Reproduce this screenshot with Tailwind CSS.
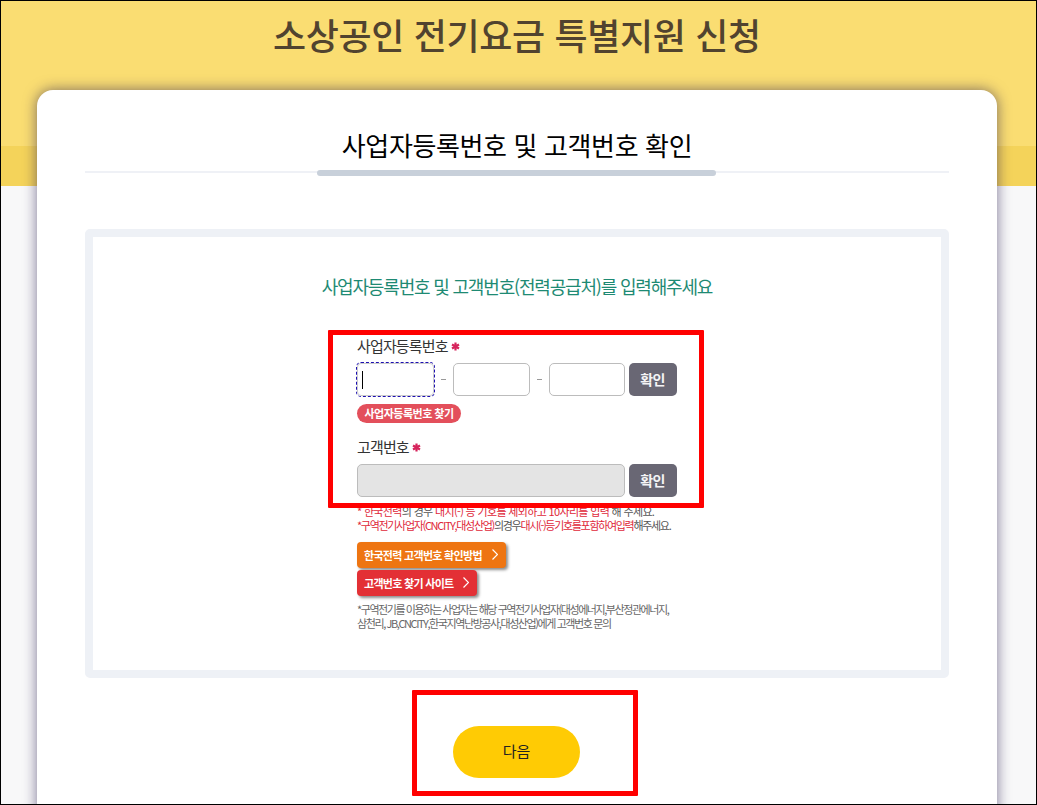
<!DOCTYPE html>
<html lang="ko">
<head>
    <meta charset="UTF-8">
    <meta name="viewport" content="width=device-width, initial-scale=1.0">
    <title>소상공인 전기요금 특별지원 신청</title>
    <script src="https://cdn.jsdelivr.net/npm/@tailwindcss/browser@4"></script>
</head>
<body class="font-['Noto_Sans_CJK_KR',sans-serif]">
    <div class="relative h-[805px] w-[1037px] overflow-hidden border border-black bg-[#f8f8f9]">
        <!-- header background -->
        <div class="absolute inset-x-0 top-0 h-[185px] border-b-[40px] border-[#f4d35a] bg-[#fadd72]"></div>

        <div class="relative flex flex-col">
            <h1 class="h-[89px] pt-[7px] pl-[272px] text-[36px] leading-[52px] font-medium tracking-[-0.37px] whitespace-nowrap text-[#51432f]">소상공인 전기요금 특별지원 신청</h1>

            <main class="ml-9 h-[760px] w-[960px] rounded-[16px] bg-white px-12 pt-9 shadow-[0_0_14px_rgba(40,30,80,0.6)]">
                <div class="relative h-[47px] border-b-2 border-[#eff1f6]">
                    <h2 class="text-center text-[26px] leading-[38px] font-normal tracking-[-0.37px] text-black">사업자등록번호 및 고객번호 확인</h2>
                    <span class="absolute top-[44px] left-[232px] h-[6px] w-[399px] rounded-full bg-[#c8d0da]"></span>
                </div>

                <section class="mt-14 h-[449px] rounded-[5px] border-8 border-[#eef1f6] pt-[35px]">
                    <p class="text-center text-[18px] leading-[28px] tracking-[-1.18px] text-[#1e8a73]">사업자등록번호 및 고객번호(전력공급처)를 입력해주세요</p>

                    <form class="ml-[264px] w-[320px] pt-8">
                        <label class="flex h-[28px] items-center text-[15px] tracking-[-0.85px] text-[#333]">사업자등록번호
                            <svg class="mt-px ml-[3px] size-[9px]" viewBox="0 0 9 9" stroke="#d6245c" stroke-width="2.2"><path d="M4.5 0.5v8M1 2.5l7 4M8 2.5l-7 4"/></svg>
                        </label>
                        <div class="mt-[3px] flex h-[33px] items-center">
                            <div class="flex h-[33px] w-[77px] items-center rounded-[4px] border border-[#ccc] pl-[4px] outline-1 outline-dashed outline-[#1d10b0]"><span class="h-[18px] w-px bg-black"></span></div>
                            <span class="ml-[7px] h-[1.5px] w-[5px] bg-[#999]"></span>
                            <div class="ml-[7px] h-[33px] w-[77px] rounded-[5px] border border-[#bcbcbc]"></div>
                            <span class="mx-[7px] h-[1.5px] w-[5px] bg-[#999]"></span>
                            <div class="h-[33px] w-[76px] rounded-[5px] border border-[#bcbcbc]"></div>
                            <button type="button" class="ml-auto h-[33px] w-[48px] rounded-[5px] bg-[#696774] pr-px text-[14px] font-bold tracking-[-0.6px] text-[#f4f4f6]">확인</button>
                        </div>
                        <button type="button" class="mt-2 block h-[19px] w-[104px] rounded-full bg-[#e34f5b] text-[11px] leading-[19px] font-bold tracking-[-0.5px] text-white">사업자등록번호 찾기</button>

                        <label class="mt-[10px] flex h-[28px] items-center text-[15px] tracking-[-0.85px] text-[#333]">고객번호
                            <svg class="mt-px ml-[3px] size-[9px]" viewBox="0 0 9 9" stroke="#d6245c" stroke-width="2.2"><path d="M4.5 0.5v8M1 2.5l7 4M8 2.5l-7 4"/></svg>
                        </label>
                        <div class="mt-[3px] flex justify-between">
                            <div class="h-[33px] w-[268px] rounded-[5px] border border-[#bcbcbc] bg-[#e4e4e4]"></div>
                            <button type="button" class="h-[33px] w-[48px] rounded-[5px] bg-[#696774] pr-px text-[14px] font-bold tracking-[-0.6px] text-[#f4f4f6]">확인</button>
                        </div>

                        <div class="mt-[7px] text-[11px] leading-[14px] whitespace-nowrap text-[#555]">
                            <p class="tracking-[-0.66px]"><span class="text-[#e0283a]">* 한국전력</span>의 경우 <span class="text-[#e0283a]">대시(-) 등 기호를 제외하고 10자리를 입력</span> 해 주세요.</p>
                            <p class="tracking-[-1.31px]"><span class="text-[#e0283a]">*구역전기사업자(CNCITY,대성산업)</span>의경우<span class="text-[#e0283a]">대시(-)등기호를포함하여입력</span>해주세요.</p>
                        </div>

                        <div class="mt-[10px] flex flex-col items-start gap-[2px] text-[11px] font-bold text-white">
                            <a class="flex h-[26px] w-[149px] items-center justify-between rounded-[4px] bg-[#ee7512] pt-px pr-[8px] pl-[7px] whitespace-nowrap tracking-[-0.7px] shadow-[2px_2px_3px_rgba(0,0,0,0.45)]">한국전력 고객번호 확인방법
                                <svg class="mb-[3px] h-[11px] w-[6px]" viewBox="0 0 6 11" fill="none" stroke="#fff" stroke-width="1.2"><path d="M0.5 0.5l5 5l-5 5"/></svg>
                            </a>
                            <a class="flex h-[26px] w-[120px] items-center justify-between rounded-[4px] bg-[#e33035] pt-px pr-[8px] pl-[7px] whitespace-nowrap tracking-[-0.7px] shadow-[2px_2px_3px_rgba(0,0,0,0.45)]">고객번호 찾기 사이트
                                <svg class="mb-[3px] h-[11px] w-[6px]" viewBox="0 0 6 11" fill="none" stroke="#fff" stroke-width="1.2"><path d="M0.5 0.5l5 5l-5 5"/></svg>
                            </a>
                        </div>

                        <div class="mt-[6px] text-[11px] leading-[14px] whitespace-nowrap text-[#666]">
                            <p class="tracking-[-1.43px]">*구역전기를 이용하는 사업자는 해당 구역전기사업자(대성에너지,부산정관에너지,</p>
                            <p class="tracking-[-1.41px]">삼천리, JB,CNCITY,한국지역난방공사,대성산업)에게 고객번호 문의</p>
                        </div>
                    </form>
                </section>

                <button type="button" class="mt-12 ml-[368px] block h-[52px] w-[127px] rounded-full bg-[#ffcb04] pb-px text-[15px] text-[#222]">다음</button>
            </main>
        </div>

        <!-- highlight frames -->
        <div class="absolute top-[329px] left-[327px] h-[178px] w-[376px] rounded-[1px] border-5 border-[#ff0000]"></div>
        <div class="absolute top-[689px] left-[411px] h-[106px] w-[226px] rounded-[1px] border-5 border-[#ff0000]"></div>
    </div>
</body>
</html>
